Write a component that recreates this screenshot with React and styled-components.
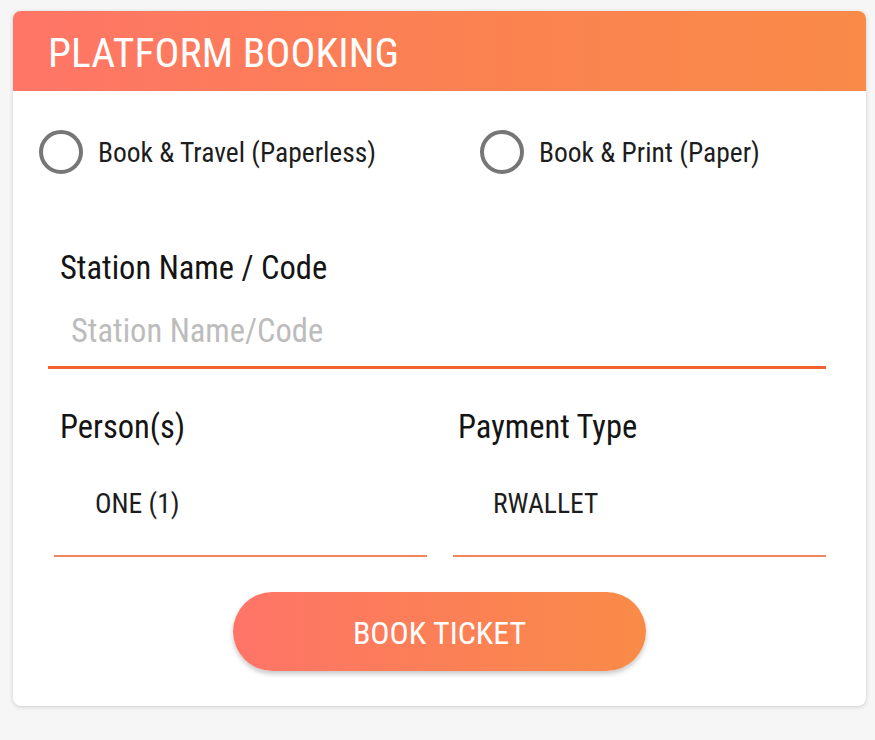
import React, { useState } from "react";
import styled, { createGlobalStyle } from "styled-components";

const GlobalStyle = createGlobalStyle`
  html, body { margin: 0; padding: 0; background: #f6f6f6; }
  body { font-family: "Roboto Condensed", "Roboto", "Liberation Sans", sans-serif; }
  * { box-sizing: border-box; }
`;

const Page = styled.div`
  padding: 11px 9px 34px 13px;
`;

const Card = styled.section`
  width: 853px;
  background: #ffffff;
  border-radius: 8px;
  box-shadow: 0 1px 4px rgba(0, 0, 0, 0.16), 0 0 1px rgba(0, 0, 0, 0.08);
  overflow: hidden;
  padding-bottom: 35px;
`;

const Header = styled.header`
  height: 80px;
  display: flex;
  align-items: center;
  padding: 2px 0 0 35px;
  background: linear-gradient(90deg, #ff7567 0%, #fb8152 50%, #f98a48 100%);
`;

const Title = styled.h1`
  margin: 0;
  font-size: 41.5px;
  font-weight: 400;
  color: #ffffff;
  letter-spacing: 0.1px;
`;

const RadioRow = styled.div`
  display: grid;
  grid-template-columns: 441px auto;
  padding: 39px 0 0 26px;
`;

const RadioLabel = styled.label`
  display: flex;
  align-items: center;
  gap: 15px;
  cursor: pointer;
  font-size: 27.5px;
  color: #1d1d1d;
`;

const RadioCircle = styled.span`
  width: 44px;
  height: 44px;
  border-radius: 50%;
  border: 4px solid #767676;
  display: flex;
  align-items: center;
  justify-content: center;
  flex-shrink: 0;
  &::after {
    content: "";
    width: 20px;
    height: 20px;
    border-radius: 50%;
    background: ${(p) => (p.$checked ? "#f7793f" : "transparent")};
  }
`;

const HiddenInput = styled.input`
  display: none;
`;

const StationField = styled.div`
  margin: 79px 40px 0 35px;
`;

const FieldLabel = styled.div`
  font-size: 32.5px;
  line-height: 30px;
  color: #141414;
  padding-left: ${(p) => p.$indent}px;
`;

const TextInput = styled.input`
  display: block;
  width: 100%;
  height: 78px;
  margin-top: 8px;
  padding: 5px 23px 0;
  border: none;
  border-bottom: 3px solid #f3612f;
  outline: none;
  background: transparent;
  font-family: "Roboto Condensed", "Roboto", sans-serif;
  font-size: 32.5px;
  color: #1d1d1d;
  &::placeholder {
    color: #bcbcbc;
  }
`;

const SelectGrid = styled.div`
  display: grid;
  grid-template-columns: 373px 373px;
  column-gap: 26px;
  margin: 43px 40px 0 41px;
`;

const SelectField = styled.div`
  display: flex;
  flex-direction: column;
`;

const SelectValue = styled.div`
  margin-top: 49px;
  padding: 0 0 39px ${(p) => p.$indent}px;
  font-size: 27.5px;
  line-height: 25px;
  color: #1d1d1d;
  border-bottom: 2.5px solid #f2865f;
`;

const ButtonRow = styled.div`
  display: flex;
  justify-content: center;
  margin-top: 35px;
`;

const BookButton = styled.button`
  width: 413px;
  height: 79px;
  border: none;
  border-radius: 40px;
  background: linear-gradient(90deg, #ff7468 0%, #fc7e58 45%, #f98b47 100%);
  box-shadow: 0 3px 5px rgba(0, 0, 0, 0.22);
  color: #ffffff;
  font-family: "Roboto Condensed", "Roboto", sans-serif;
  font-size: 32px;
  padding: 2px 0 0;
  cursor: pointer;
`;

export default function App() {
  const [mode, setMode] = useState(null);
  const [station, setStation] = useState("");
  const options = [
    { id: "paperless", label: "Book & Travel (Paperless)" },
    { id: "paper", label: "Book & Print (Paper)" },
  ];
  return (
    <Page>
      <GlobalStyle />
      <Card>
        <Header>
          <Title>PLATFORM BOOKING</Title>
        </Header>
        <RadioRow>
          {options.map((o) => (
            <RadioLabel key={o.id}>
              <HiddenInput
                type="radio"
                name="mode"
                checked={mode === o.id}
                onChange={() => setMode(o.id)}
              />
              <RadioCircle $checked={mode === o.id} />
              {o.label}
            </RadioLabel>
          ))}
        </RadioRow>
        <StationField>
          <FieldLabel $indent={12}>Station Name / Code</FieldLabel>
          <TextInput
            placeholder="Station Name/Code"
            value={station}
            onChange={(e) => setStation(e.target.value)}
          />
        </StationField>
        <SelectGrid>
          <SelectField>
            <FieldLabel $indent={6}>Person(s)</FieldLabel>
            <SelectValue $indent={41}>ONE (1)</SelectValue>
          </SelectField>
          <SelectField>
            <FieldLabel $indent={5}>Payment Type</FieldLabel>
            <SelectValue $indent={40}>RWALLET</SelectValue>
          </SelectField>
        </SelectGrid>
        <ButtonRow>
          <BookButton>BOOK TICKET</BookButton>
        </ButtonRow>
      </Card>
    </Page>
  );
}
